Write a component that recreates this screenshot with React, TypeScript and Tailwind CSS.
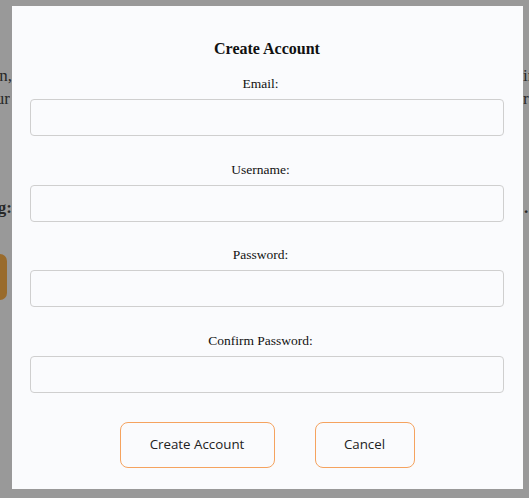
import { ReactNode } from 'react'

// Signup modal over a dimmed page

const fields = ['Email:', 'Username:', 'Password:', 'Confirm Password:']

function EdgeText({ children, side, width }: { children: ReactNode; side: 'left' | 'right'; width: string }) {
  return (
    <div className={`${width} overflow-hidden flex ${side === 'left' ? 'justify-end' : 'justify-start'}`}>
      <span className="whitespace-nowrap">{children}</span>
    </div>
  )
}

function Field({ label }: { label: string }) {
  return (
    <div className="flex flex-col">
      <label className="pr-[13px] text-center text-[13.5px] leading-[15px] text-[#111] mb-[8px]">{label}</label>
      <input
        type="text"
        className="h-[37px] w-full rounded-[4px] border border-[#cfcfcf] bg-[#fafbfd] px-2 outline-none"
      />
    </div>
  )
}

export default function App() {
  return (
    <div className="relative h-[498px] w-[529px] overflow-hidden bg-white font-['Liberation_Serif',serif]">
      {/* page behind the modal */}
      <div className="flex flex-col pt-[64px] text-[17px] leading-[23px] text-[#444]">
        <div className="flex justify-between">
          <EdgeText side="left" width="w-[12px]">information,</EdgeText>
          <EdgeText side="right" width="w-[6px]">in</EdgeText>
        </div>
        <div className="flex justify-between">
          <EdgeText side="left" width="w-[10px]">our</EdgeText>
          <EdgeText side="right" width="w-[6px]">rn</EdgeText>
        </div>
        <div className="mt-[86px] flex justify-between font-bold">
          <EdgeText side="left" width="w-[12px]">Joining:</EdgeText>
          <EdgeText side="right" width="w-[5px]">.</EdgeText>
        </div>
        <div className="mt-[35px] h-[46px] w-[7px] rounded-r-[7px] bg-[#ffb24a]" />
      </div>

      <div className="absolute inset-0 bg-black/40" />

      {/* modal */}
      <div className="absolute left-[12px] top-[6px] flex h-[483px] w-[511px] flex-col bg-[#fafbfd] pl-[18px] pr-[19px] pt-[33px]">
        <h2 className="text-center text-[16px] font-bold leading-[19px] text-[#111]">Create Account</h2>
        <div className="mt-[18px] flex flex-col gap-[25.7px]">
          {fields.map((f) => (
            <Field key={f} label={f} />
          ))}
        </div>
        <div className="mt-[29px] flex justify-center gap-[40px] font-['Open_Sans',sans-serif] text-[13.33px] text-[#222]">
          <button className="h-[46px] w-[155px] rounded-[8px] border border-[#f5a35f] bg-transparent">
            Create Account
          </button>
          <button className="h-[46px] w-[100px] rounded-[8px] border border-[#f5a35f] bg-transparent">
            Cancel
          </button>
        </div>
      </div>
    </div>
  )
}
